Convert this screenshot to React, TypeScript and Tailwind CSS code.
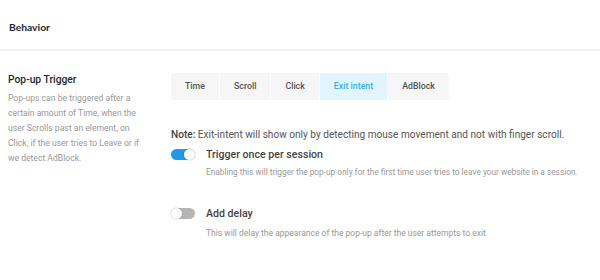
import { useState } from 'react';

const tabs = ['Time', 'Scroll', 'Click', 'Exit intent', 'AdBlock'];

function Toggle({ on }: { on: boolean }) {
  return (
    <span
      className={`relative inline-block h-[11px] w-[24px] shrink-0 rounded-full ${
        on ? 'bg-[#1f9be4]' : 'bg-[#b5b5b5]'
      }`}
    >
      <span
        className={`absolute top-0 h-[11px] w-[11px] rounded-full bg-white shadow-[0_0_0_1px_rgba(0,0,0,0.08)] ${
          on ? 'right-0' : 'left-0'
        }`}
      />
    </span>
  );
}

export default function App() {
  const [active, setActive] = useState('Exit intent');

  return (
    <div className="h-[280px] w-[600px] bg-white font-['Roboto',sans-serif]">
      {/* Header */}
      <div className="flex h-[51px] items-center border-b-2 border-[#f1f1f1] px-[9px] pt-[7px]">
        <h2 className="font-['Lato',sans-serif] text-[10.3px] font-bold text-[#23282d]">Behavior</h2>
      </div>

      <div className="flex pt-[21px]">
        {/* Left column */}
        <div className="w-[171px] shrink-0 pl-[8px] pr-[25px]">
          <h3 className="text-[10.3px] font-medium leading-[15px] text-[#23282d]">Pop-up Trigger</h3>
          <p className="mt-[4px] text-[8.6px] leading-[15px] text-[#999]">
            Pop-ups can be triggered after a certain amount of Time, when the user Scrolls past an element, on Click, if the user tries to Leave or if we detect AdBlock.
          </p>
        </div>

        {/* Right column */}
        <div className="flex-1">
          <div className="inline-flex gap-px overflow-hidden rounded-[3px] bg-white">
            {tabs.map((t) => (
              <button
                key={t}
                onClick={() => setActive(t)}
                className={`h-[27px] px-[14px] text-[8.8px] font-medium ${
                  active === t ? 'bg-[#e2f5fe] text-[#3aaee8]' : 'bg-[#f6f6f6] text-[#555]'
                }`}
              >
                {t}
              </button>
            ))}
          </div>

          <p className="mt-[27px] text-[10.1px] leading-[15px] text-[#555]">
            <span className="font-medium text-[#444]">Note:</span> Exit-intent will show only by detecting mouse movement and not with finger scroll.
          </p>

          <div className="mt-[5px] flex h-[15px] items-center gap-[11px]">
            <Toggle on />
            <span className="text-[10.6px] font-medium text-[#444]">Trigger once per session</span>
          </div>
          <p className="mt-[3px] pl-[35px] text-[8.3px] leading-[14px] text-[#999]">
            Enabling this will trigger the pop-up only for the first time user tries to leave your website in a session.
          </p>

          <div className="mt-[27px] flex h-[15px] items-center gap-[11px]">
            <Toggle on={false} />
            <span className="text-[10.6px] font-medium text-[#444]">Add delay</span>
          </div>
          <p className="mt-[5px] pl-[35px] text-[8.5px] leading-[14px] text-[#999]">
            This will delay the appearance of the pop-up after the user attempts to exit.
          </p>
        </div>
      </div>
    </div>
  );
}
